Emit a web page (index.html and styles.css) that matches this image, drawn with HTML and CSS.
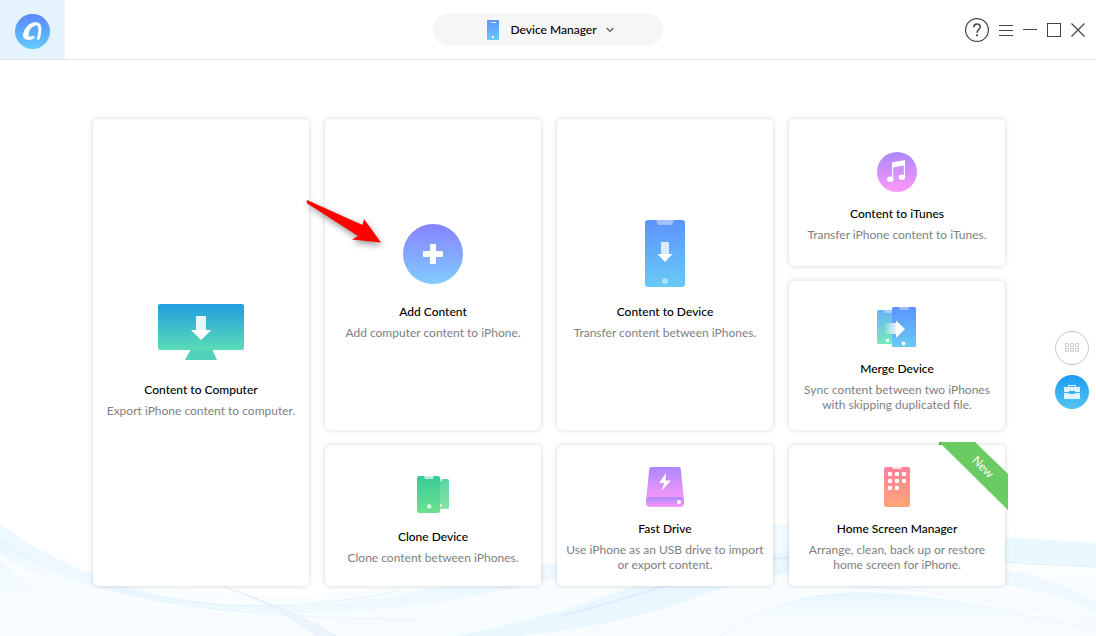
FILE: index.html
```html
<!DOCTYPE html>
<html lang="en">

<head>
  <meta charset="UTF-8">
  <meta name="viewport" content="width=device-width, initial-scale=1.0">
  <title>Device Manager</title>
  <link rel="stylesheet" href="styles.css">
</head>

<body>
  <header class="header">
    <button class="logo" aria-label="Home">
      <svg width="35" height="35" viewBox="0 0 36 36">
        <defs>
          <linearGradient id="gLogo" x1="0" y1="0" x2="0" y2="1">
            <stop offset="0" stop-color="#5a86ff" />
            <stop offset="1" stop-color="#62ccfb" />
          </linearGradient>
        </defs>
        <circle cx="18" cy="18" r="18" fill="url(#gLogo)" />
        <path d="M18.500 24C13 26.500 9.300 25 10 21C11 15.500 16 10 21.500 10C25.500 10 25.800 13.500 25.500 17C25.300 20 25 22.500 24 25" fill="none" stroke="#fff" stroke-width="3" stroke-linecap="round" />
        <path d="M8.500 22C9 15 15 9 21 8.600L21.500 11.500C17 13 14 17 14 21.500L15 24.500L11 25.500z" fill="#fff" />
      </svg>
    </button>

    <label class="switcher">
      <svg width="12" height="20" viewBox="0 0 12 20">
        <rect width="12" height="20" rx="1" fill="url(#gBlue)" />
        <path d="M3 2.500h1M5 2.500h4" stroke="#fff" />
        <rect x="5" y="16" width="2" height="2" fill="#fff" />
      </svg>
      <select aria-label="Module">
        <option>Device Manager</option>
      </select>
      <svg class="chevron" width="8" height="6" viewBox="0 0 8 6">
        <path d="M.7 1l3.300 3.300L7.300 1" fill="none" stroke="#555" stroke-width="1.200" />
      </svg>
    </label>

    <div class="tools">
      <button aria-label="Help">
        <svg width="24" height="24" viewBox="0 0 24 24" fill="none" stroke="#444">
          <circle cx="12" cy="12" r="11.400" stroke-width="1.200" />
          <path d="M8.800 9.200c0-4.200 6.500-4.200 6.500-.4 0 2.600-3.300 2.800-3.300 6" stroke-width="1.500" />
          <path d="M12 16.300v1.900" stroke-width="1.700" />
        </svg>
      </button>
      <button aria-label="Menu">
        <svg width="14" height="14" viewBox="0 0 14 14" stroke="#444">
          <path d="M0 2.500h14M0 7.500h14M0 12.500h14" />
        </svg>
      </button>
      <button aria-label="Minimize">
        <svg width="14" height="14" viewBox="0 0 14 14" stroke="#444">
          <path d="M0 6.500h14" />
        </svg>
      </button>
      <button aria-label="Maximize">
        <svg width="14" height="14" viewBox="0 0 14 14" fill="none" stroke="#444">
          <rect x=".5" y=".5" width="13" height="13" />
        </svg>
      </button>
      <button aria-label="Close">
        <svg width="14" height="14" viewBox="0 0 14 14" stroke="#444">
          <path d="M.5.500l13 13M13.500.500l-13 13" stroke-width="1.200" />
        </svg>
      </button>
    </div>
  </header>

  <!-- background waves -->
  <svg class="waves" viewBox="0 0 1096 136" preserveAspectRatio="none" aria-hidden="true">
    <defs>
      <linearGradient id="gWave" x1="0" y1="0" x2="0" y2="1">
        <stop offset="0" stop-color="#e4f6ff" />
        <stop offset="1" stop-color="#fff" stop-opacity="0" />
      </linearGradient>
      <linearGradient id="gHaze" x1="0" y1="0" x2="0" y2="1">
        <stop offset="0" stop-color="#f6fcff" stop-opacity="0" />
        <stop offset="1" stop-color="#f6fcff" />
      </linearGradient>
    </defs>
    <path d="M0 20C100 90 250 110 400 85S800 10 1096 40V136H0z" fill="url(#gHaze)" />
    <path d="M0 23C60 70 150 106 270 106C380 106 460 80 560 62L640 50C530 90 420 113 290 113C160 113 60 84 0 42z" fill="#eef9ff" />
    <path d="M0 38C100 105 220 118 420 122C220 128 90 110 0 55z" fill="url(#gWave)" />
    <path d="M0 60C30 85 60 110 85 136H0z" fill="url(#gWave)" opacity=".6" />
    <path d="M215 80C260 100 290 112 336 136H316C280 112 250 95 215 80z" fill="#edf4fe" />
    <path d="M454 136C580 116 670 62 788 50L1006 36V46C900 52 760 72 700 96C640 120 570 130 520 136z" fill="#eaf7ff" />
    <path d="M560 116C650 95 710 65 790 57" fill="none" stroke="#dfeafb" stroke-width="2" />
    <path d="M720 136C760 108 800 93 860 93C940 93 1010 114 1096 129V136z" fill="url(#gWave)" />
    <path d="M740 23L790 24V50L740 64z" fill="#f1faff" />
    <path d="M960 36C1010 36 1050 41 1096 43V67C1060 64 1030 62 960 60z" fill="#eaf8ff" />
    <path d="M960 57C1015 65 1050 64 1096 67" fill="none" stroke="#dcedfa" />
    <path d="M960 64C1020 68 1060 83 1096 101V112C1060 94 1010 83 960 80z" fill="#eef9ff" />
    <g fill="none" stroke="#e3f1fb">
      <path d="M0 42C100 103 210 116 420 120" opacity=".7" />
      <path d="M90 82C200 112 290 112 400 91" />
      <path d="M217 84C270 104 300 115 336 136" stroke="#e3e9fb" />
      <path d="M720 136C760 108 800 93 860 93C940 93 1010 114 1096 129" opacity=".6" />
      <path d="M850 86C930 88 1020 106 1096 120" opacity=".5" />
    </g>
  </svg>

  <main class="main">
    <div class="cards">
      <button class="card large computer">
        <span class="icon">
          <svg width="86" height="56" viewBox="0 0 86 56">
            <defs>
              <linearGradient id="gScreen" x1="0" y1="0" x2="0" y2="1">
                <stop offset="0" stop-color="#209de1" />
                <stop offset="1" stop-color="#5bdcb4" />
              </linearGradient>
            </defs>
            <path d="M33 45h21l5 11H27z" fill="#51d0bb" />
            <rect width="86" height="46" rx="2" fill="url(#gScreen)" />
            <path d="M38 12h10v14H38z" fill="#e8f6fb" />
            <path d="M33 26h20.500L43 36z" fill="#fff" />
          </svg>
        </span>
        <span class="title">Content to Computer</span>
        <span class="desc">Export iPhone content to computer.</span>
      </button>

      <button class="card large tall">
        <span class="icon">
          <svg width="60" height="60" viewBox="0 0 60 60">
            <defs>
              <linearGradient id="gAdd" x1="0" y1="0" x2="0" y2="1">
                <stop offset="0" stop-color="#8782ff" />
                <stop offset="1" stop-color="#80ccff" />
              </linearGradient>
            </defs>
            <circle cx="30" cy="30" r="30" fill="url(#gAdd)" />
            <rect x="27" y="20" width="6" height="20" rx="1" fill="#fff" />
            <rect x="20" y="27" width="20" height="6" rx="1" fill="#fff" />
          </svg>
        </span>
        <span class="title">Add Content</span>
        <span class="desc">Add computer content to iPhone.</span>
      </button>

      <button class="card large tall">
        <span class="icon">
          <svg width="40" height="67" viewBox="0 0 40 67">
            <defs>
              <linearGradient id="gBlue" x1="0" y1="0" x2="0" y2="1">
                <stop offset="0" stop-color="#5e92ff" />
                <stop offset="1" stop-color="#67cbf4" />
              </linearGradient>
            </defs>
            <rect width="40" height="67" rx="3" fill="url(#gBlue)" />
            <path d="M11 0h18l-2 5H13z" fill="#a3bfff" />
            <path d="M16 22h8v12h-8z" fill="#dceafe" />
            <path d="M12.500 34h15L20 42z" fill="#fff" />
            <circle cx="20" cy="61" r="3" fill="#aee1fb" />
          </svg>
        </span>
        <span class="title">Content to Device</span>
        <span class="desc">Transfer content between iPhones.</span>
      </button>

      <button class="card">
        <span class="icon">
          <svg width="40" height="40" viewBox="0 0 40 40">
            <defs>
              <linearGradient id="gPink" x1="0" y1="0" x2="0" y2="1">
                <stop offset="0" stop-color="#ab88fc" />
                <stop offset="1" stop-color="#fd98f8" />
              </linearGradient>
            </defs>
            <circle cx="20" cy="20" r="20" fill="url(#gPink)" />
            <path d="M15 10.500L28 8v17h-1.200V13.500L16.200 15.500V27H15z" fill="#fff" />
            <ellipse cx="13.200" cy="27.300" rx="3.200" ry="2.700" fill="#fff" />
            <ellipse cx="24.900" cy="25.200" rx="3.200" ry="2.700" fill="#fff" />
          </svg>
        </span>
        <span class="title">Content to iTunes</span>
        <span class="desc">Transfer iPhone content to iTunes.</span>
      </button>

      <button class="card">
        <span class="icon">
          <svg width="40" height="40" viewBox="0 0 40 40">
            <defs>
              <linearGradient id="gTeal" x1="0" y1="0" x2="0" y2="1">
                <stop offset="0" stop-color="#68b3f8" />
                <stop offset="1" stop-color="#74ebb9" />
              </linearGradient>
              <linearGradient id="gTrail">
                <stop offset="0" stop-color="#fff" stop-opacity="0" />
                <stop offset="1" stop-color="#fff" stop-opacity=".9" />
              </linearGradient>
            </defs>
            <rect x="0" y="3" width="20" height="34" rx="1.500" fill="url(#gTeal)" />
            <path d="M7 3h9v3H8z" fill="#a5d3fb" />
            <rect x="15" y="0" width="24" height="40" rx="1.500" fill="url(#gBlue)" />
            <path d="M22 0h10l-1 3h-8z" fill="#9dbdff" />
            <path d="M7 16h12v11H7z" fill="url(#gTrail)" />
            <path d="M19 13.500l9 8.500-9 9z" fill="#fff" />
            <circle cx="10.500" cy="33.500" r="1.800" fill="#fff" />
            <circle cx="26.500" cy="36.500" r="2" fill="#fff" />
          </svg>
        </span>
        <span class="title">Merge Device</span>
        <span class="desc">Sync content between two iPhones with skipping duplicated file.</span>
      </button>

      <button class="card">
        <span class="icon">
          <svg width="32" height="37" viewBox="0 0 32 37">
            <defs>
              <linearGradient id="gGreen" x1="0" y1="0" x2="0" y2="1">
                <stop offset="0" stop-color="#37ca98" />
                <stop offset="1" stop-color="#6fe08e" />
              </linearGradient>
            </defs>
            <rect x="14" y="3" width="18" height="30" rx="1.500" fill="url(#gGreen)" opacity=".83" />
            <path d="M20 3h6l-1 2h-5z" fill="#b7ecd6" />
            <circle cx="23.500" cy="29.500" r="1.300" fill="#fff" />
            <rect width="23" height="37" rx="2" fill="url(#gGreen)" />
            <path d="M7 0h10l-1 3H8z" fill="#bcecda" />
            <circle cx="12.200" cy="30.500" r="2.300" fill="#dff8e8" />
          </svg>
        </span>
        <span class="title">Clone Device</span>
        <span class="desc">Clone content between iPhones.</span>
      </button>

      <button class="card">
        <span class="icon">
          <svg width="38" height="40" viewBox="0 0 38 40">
            <path d="M5 0h28q1.500 0 1.700 1.500L38 34H0L3.300 1.500Q3.500 0 5 0z" fill="url(#gPink)" />
            <rect y="30" width="38" height="10" rx="4" fill="url(#gPink)" />
            <circle cx="33" cy="35" r="2" fill="#fff" />
            <path d="M20 6l-7 10h5l-2.500 8L25 13.500h-5.500z" fill="#fff" />
          </svg>
        </span>
        <span class="title">Fast Drive</span>
        <span class="desc">Use iPhone as an USB drive to import or export content.</span>
      </button>

      <button class="card">
        <span class="icon">
          <svg width="26" height="40" viewBox="0 0 26 40">
            <defs>
              <linearGradient id="gCoral" x1="0" y1="0" x2="0" y2="1">
                <stop offset="0" stop-color="#ff819c" />
                <stop offset="1" stop-color="#ffa576" />
              </linearGradient>
            </defs>
            <rect width="26" height="40" rx="2.500" fill="url(#gCoral)" />
            <path d="M8 0h10l-1 2H9z" fill="#ffe0e6" />
            <g fill="#fff">
              <rect x="4" y="5" width="4" height="4" rx="1" />
              <rect x="11" y="5" width="4" height="4" rx="1" />
              <rect x="18" y="5" width="4" height="4" rx="1" />
              <rect x="4" y="12" width="4" height="4" rx="1" />
              <rect x="11" y="12" width="4" height="4" rx="1" />
              <rect x="18" y="12" width="4" height="4" rx="1" />
              <rect x="4" y="19" width="4" height="4" rx="1" />
              <rect x="11" y="19" width="4" height="4" rx="1" />
            </g>
          </svg>
        </span>
        <span class="title">Home Screen Manager</span>
        <span class="desc">Arrange, clean, back up or restore home screen for iPhone.</span>
        <svg class="ribbon" width="69" height="68" viewBox="0 0 69 68">
          <path d="M0 0h5v3H0zM66 62h3v6z" fill="#4fae4a" />
          <path d="M0 0h36l33 32v36z" fill="#6acb62" />
          <text x="44" y="29" transform="rotate(45 44 25)" text-anchor="middle">New</text>
        </svg>
      </button>
    </div>

    <div class="side">
      <button class="round" aria-label="Categories">
        <svg width="14" height="10" viewBox="0 0 14 10" fill="none" stroke="#ccc">
          <path d="M.5.500h3v3h-3zM5.500.500h3v3h-3zM10.500.500h3v3h-3zM.5 5.500h3v3h-3zM5.500 5.500h3v3h-3zM10.500 5.500h3v3h-3z" />
        </svg>
      </button>
      <button class="round active" aria-label="Toolbox">
        <svg width="16" height="14" viewBox="0 0 16 14" fill="#e1f3fe">
          <path d="M4 2V0h8v2h-1V1H5v1z" />
          <path d="M0 2h16v5h-5V6H5v1H0zM0 8h5v1h6V8h5v6H0z" />
        </svg>
      </button>
    </div>

    <svg class="pointer" width="90" height="60" viewBox="0 0 90 60" aria-hidden="true">
      <path d="M7 6Q6 9 8 10L58 42 52 45.500 81 48.500 64 25 62.500 31z" fill="#f00" />
    </svg>
  </main>
</body>

</html>
```
FILE: styles.css
```css
* {
  margin: 0;
  padding: 0;
  box-sizing: border-box;
}

body {
  position: relative;
  min-height: 100vh;
  background-color: #fff;
  color: #000;
  font: 12px/15px Lato, "Open Sans", sans-serif;
}

button,
select {
  border: 0;
  background: none;
  color: inherit;
  font: inherit;
  cursor: pointer;
}

svg {
  display: block;
}

/* header */
.header {
  display: grid;
  grid-template-columns: 1fr auto 1fr;
  align-items: center;
  height: 60px;
  border-bottom: 1px solid #e2e2e2;
}

.logo {
  display: flex;
  align-items: center;
  justify-content: center;
  width: 65px;
  height: 59px;
  padding-top: 3px;
  background-color: #e4f3fd;
}

.switcher {
  display: flex;
  align-items: center;
  justify-content: center;
  width: 230px;
  height: 33px;
  padding-left: 4px;
  border-radius: 17px;
  background-color: #f6f6f6;
}

.switcher select {
  margin: 0 8px 0 12px;
  appearance: none;
  font-weight: 500;
}

.chevron {
  pointer-events: none;
}

.tools {
  display: flex;
  align-items: center;
  justify-content: flex-end;
  gap: 10px;
  padding-right: 11px;
}

/* background */
.waves {
  position: absolute;
  left: 0;
  bottom: 0;
  width: 100%;
  height: 136px;
}

/* content */
.main {
  position: relative;
  display: flex;
  align-items: center;
  padding: 59px 7px 50px 93px;
}

.cards {
  flex: 1;
  display: grid;
  grid-template-columns: repeat(4, 1fr);
  grid-template-rows: minmax(147px, auto) minmax(149px, auto) minmax(141px, auto);
  gap: 15px 16px;
}

.card {
  position: relative;
  display: flex;
  flex-direction: column;
  align-items: center;
  justify-content: center;
  padding: 8px 6px 0;
  border-radius: 5px;
  background-color: #fff;
  box-shadow: 0 0 5px rgba(0, 0, 0, .17);
  text-align: center;
}

.computer {
  grid-row: span 3;
}

.tall {
  grid-row: span 2;
}

.icon {
  display: flex;
  align-items: center;
  height: 40px;
  margin-bottom: 12px;
}

.large .icon {
  height: 72px;
}

.title {
  margin-bottom: 3px;
  font-weight: 500;
  line-height: 20px;
}

.desc {
  color: #808080;
}

.ribbon {
  position: absolute;
  top: -3px;
  right: -3px;
}

.ribbon text {
  fill: #fff;
  font-size: 12px;
}

/* side buttons */
.side {
  display: flex;
  flex-direction: column;
  gap: 10px;
  margin-left: 50px;
  padding-top: 35px;
}

.round {
  display: flex;
  align-items: center;
  justify-content: center;
  width: 34px;
  height: 34px;
  border: 1px solid #ccc;
  border-radius: 50%;
  background-color: #fff;
}

.round.active {
  border: 0;
  background: linear-gradient(#1b9af2, #55c5f2);
}

/* red arrow over the cards */
.pointer {
  position: absolute;
  left: 300px;
  top: 134px;
  filter: drop-shadow(1px 3px 3px rgba(0, 0, 0, .4));
}
```
